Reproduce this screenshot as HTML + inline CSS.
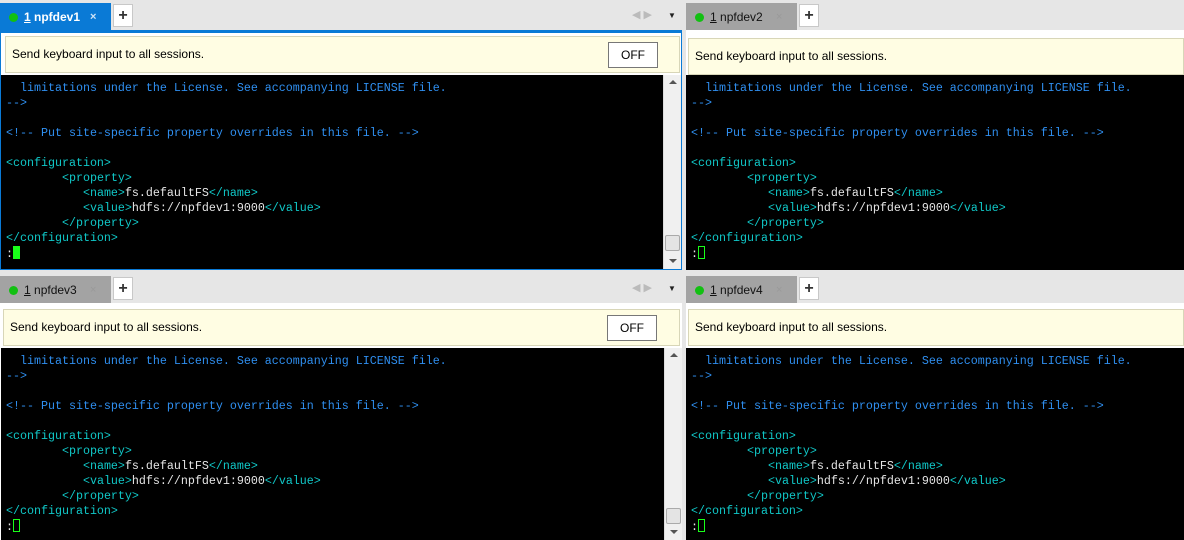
<!DOCTYPE html>
<html><head><meta charset="utf-8"><style>
*{margin:0;padding:0;box-sizing:border-box}
body{width:1184px;height:540px;background:#e6e6e6;position:relative;overflow:hidden;font-family:"Liberation Sans","DejaVu Sans",sans-serif}
.pane{position:absolute;overflow:hidden}
.tab{position:absolute;top:3px;height:28px;width:111px;font-size:12px;line-height:28px;padding-left:24px}
.tab .dot{position:absolute;left:9px;top:10px;width:9px;height:9px;border-radius:50%;background:#12c012}
.tab .x{position:absolute;left:90px;top:0;font-size:11px;color:#999}
.tab u{text-decoration:underline}
.act{background:#0a7ad6;color:#fff;font-weight:bold}
.act .x{color:#cfe4f7}
.ina{background:#a3a3a3;color:#111}
.plus{position:absolute;top:4px;width:20px;height:23px;background:#fff;border:1px solid #c8c8c8;font-size:16px;font-weight:bold;text-align:center;line-height:21px;color:#333}
.body{position:absolute;top:30px;left:0;right:0;bottom:0;background:#fff}
.banner{position:absolute;top:6px;height:37px;background:#fffde3;border:1px solid #d8d6b8;font-size:12px;line-height:35px;padding-left:6px;color:#000}
.off{position:absolute;top:5px;width:50px;height:26px;border:1px solid #777;background:#fff;text-align:center;line-height:24px;font-size:12px}
.term{position:absolute;top:45px;bottom:0;background:#000;font-family:"Liberation Mono",monospace;font-size:11.67px;line-height:15px;white-space:pre;color:#e6e6e6;padding:5px 0 0 5px}
.c{color:#2f8ff0}.t{color:#10c8c8}
.cur{display:inline-block;width:7px;height:13px;vertical-align:-2px;border:1px solid #19ff19}
.full{background:#19ff19}
.sb{position:absolute;top:45px;bottom:0;width:18px;background:#f0f0f0;border-left:1px solid #ddd}
.thumb{position:absolute;left:1px;width:15px;height:16px;background:#e4e4e4;border:1px solid #aaa;border-radius:2px}
.arr{position:absolute;left:5px;width:0;height:0;border-left:4px solid transparent;border-right:4px solid transparent}
.nav{position:absolute;top:8px;font-size:11px;color:#bbb}
</style></head><body>

<!-- top-left -->
<div class="pane" style="left:0;top:0;width:682px;height:270px">
 <div class="tab act"><span class="dot"></span><u>1</u> npfdev1<span class="x">×</span></div>
 <div class="plus" style="left:113px">+</div>
 <span class="nav" style="left:632px">◀ ▶</span><span class="nav" style="left:668px;color:#222;font-size:8px;top:11px">▼</span>
 <div class="body" style="border:1px solid #0a7ad6;border-top-width:3px">
  <div class="banner" style="left:4px;right:1px;top:3px">Send keyboard input to all sessions.<div class="off" style="left:602px">OFF</div></div>
  <div class="term" style="left:0;right:17px;top:42px;padding-left:5px;padding-top:6px"><span class="c">  limitations under the License. See accompanying LICENSE file.
--&gt;

&lt;!-- Put site-specific property overrides in this file. --&gt;</span>

<span class="t">&lt;configuration&gt;</span>
        <span class="t">&lt;property&gt;</span>
           <span class="t">&lt;name&gt;</span>fs.defaultFS<span class="t">&lt;/name&gt;</span>
           <span class="t">&lt;value&gt;</span>hdfs://npfdev1:9000<span class="t">&lt;/value&gt;</span>
        <span class="t">&lt;/property&gt;</span>
<span class="t">&lt;/configuration&gt;</span>
:<span class="cur full"></span></div>
  <div class="sb" style="right:0;top:42px"><div class="arr" style="top:5px;border-bottom:4px solid #555"></div><div class="thumb" style="top:160px"></div><div class="arr" style="top:184px;border-top:4px solid #555"></div></div>
 </div>
</div>

<!-- top-right -->
<div class="pane" style="left:685px;top:0;width:499px;height:270px">
 <div class="tab ina" style="left:1px"><span class="dot"></span><u>1</u> npfdev2<span class="x">×</span></div>
 <div class="plus" style="left:114px">+</div>
 <div class="body" style="left:1px">
  <div class="banner" style="left:2px;right:0;top:8px">Send keyboard input to all sessions.</div>
  <div class="term" style="left:0;right:0;padding-top:6px"><span class="c">  limitations under the License. See accompanying LICENSE file.
--&gt;

&lt;!-- Put site-specific property overrides in this file. --&gt;</span>

<span class="t">&lt;configuration&gt;</span>
        <span class="t">&lt;property&gt;</span>
           <span class="t">&lt;name&gt;</span>fs.defaultFS<span class="t">&lt;/name&gt;</span>
           <span class="t">&lt;value&gt;</span>hdfs://npfdev1:9000<span class="t">&lt;/value&gt;</span>
        <span class="t">&lt;/property&gt;</span>
<span class="t">&lt;/configuration&gt;</span>
:<span class="cur"></span></div>
 </div>
</div>

<!-- bottom-left -->
<div class="pane" style="left:0;top:273px;width:682px;height:267px">
 <div class="tab ina"><span class="dot"></span><u>1</u> npfdev3<span class="x">×</span></div>
 <div class="plus" style="left:113px">+</div>
 <span class="nav" style="left:632px">◀ ▶</span><span class="nav" style="left:668px;color:#222;font-size:8px;top:11px">▼</span>
 <div class="body">
  <div class="banner" style="left:3px;right:2px">Send keyboard input to all sessions.<div class="off" style="left:603px">OFF</div></div>
  <div class="term" style="left:1px;right:18px;padding-top:6px"><span class="c">  limitations under the License. See accompanying LICENSE file.
--&gt;

&lt;!-- Put site-specific property overrides in this file. --&gt;</span>

<span class="t">&lt;configuration&gt;</span>
        <span class="t">&lt;property&gt;</span>
           <span class="t">&lt;name&gt;</span>fs.defaultFS<span class="t">&lt;/name&gt;</span>
           <span class="t">&lt;value&gt;</span>hdfs://npfdev1:9000<span class="t">&lt;/value&gt;</span>
        <span class="t">&lt;/property&gt;</span>
<span class="t">&lt;/configuration&gt;</span>
:<span class="cur"></span></div>
  <div class="sb" style="right:0"><div class="arr" style="top:5px;border-bottom:4px solid #555"></div><div class="thumb" style="top:160px"></div><div class="arr" style="top:182px;border-top:4px solid #555"></div></div>
 </div>
</div>

<!-- bottom-right -->
<div class="pane" style="left:685px;top:273px;width:499px;height:267px">
 <div class="tab ina" style="left:1px"><span class="dot"></span><u>1</u> npfdev4<span class="x">×</span></div>
 <div class="plus" style="left:114px">+</div>
 <div class="body" style="left:1px">
  <div class="banner" style="left:2px;right:0">Send keyboard input to all sessions.</div>
  <div class="term" style="left:0;right:0;padding-top:6px"><span class="c">  limitations under the License. See accompanying LICENSE file.
--&gt;

&lt;!-- Put site-specific property overrides in this file. --&gt;</span>

<span class="t">&lt;configuration&gt;</span>
        <span class="t">&lt;property&gt;</span>
           <span class="t">&lt;name&gt;</span>fs.defaultFS<span class="t">&lt;/name&gt;</span>
           <span class="t">&lt;value&gt;</span>hdfs://npfdev1:9000<span class="t">&lt;/value&gt;</span>
        <span class="t">&lt;/property&gt;</span>
<span class="t">&lt;/configuration&gt;</span>
:<span class="cur"></span></div>
 </div>
</div>

</body></html>
